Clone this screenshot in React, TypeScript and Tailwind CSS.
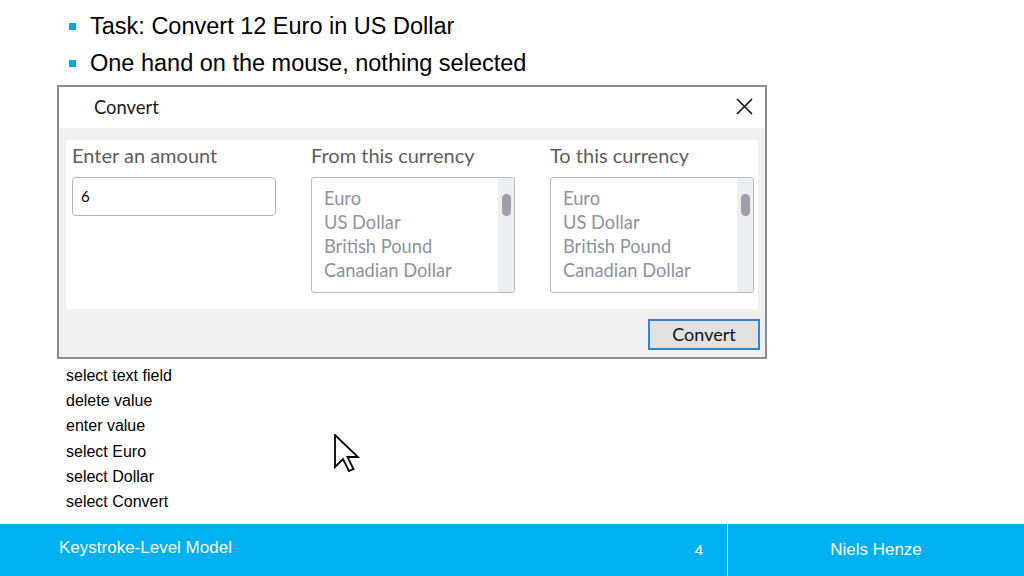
import React from 'react';

const STEPS = ['select text field', 'delete value', 'enter value', 'select Euro', 'select Dollar', 'select Convert'];
const CURRENCIES = ['Euro', 'US Dollar', 'British Pound', 'Canadian Dollar'];

function CurrencyList() {
  return (
    <div className="relative h-[116px] w-[204px] rounded-[3px] border border-[#b9b9b9] bg-white">
      <div className="pl-[12px] pt-[8px] text-[18.3px] leading-[24px] text-[#8c93a1]">
        {CURRENCIES.map((c) => (
          <div key={c}>{c}</div>
        ))}
      </div>
      {/* scrollbar track + thumb */}
      <div className="absolute right-0 top-0 bottom-0 w-[16px] rounded-r-[3px] bg-[#eceef3]">
        <div className="mx-auto mt-[16px] h-[22px] w-[9px] rounded-full bg-[#9ca1a9]" />
      </div>
    </div>
  );
}

export default function App() {
  return (
    <div className="relative flex h-[576px] w-[1024px] flex-col overflow-hidden bg-white" style={{ fontFamily: '"Liberation Sans", Arial, sans-serif' }}>
      {/* bullets */}
      <div className="pl-[69px] pt-[8px] text-[23.5px] leading-[37px] text-black">
        {['Task: Convert 12 Euro in US Dollar', 'One hand on the mouse, nothing selected'].map((t) => (
          <div key={t} className="flex items-center">
            <span className="mr-[14px] h-[7px] w-[7px] bg-[#00a6e6]" />
            <span>{t}</span>
          </div>
        ))}
      </div>

      {/* dialog */}
      <div className="ml-[57px] mt-[3px] flex h-[274px] w-[710px] flex-col border-2 border-[#8c8c8c] bg-[#f0f0f0]" style={{ fontFamily: 'Lato, "Open Sans", sans-serif' }}>
        <div className="flex h-[41px] items-center justify-between bg-white pl-[35px] pr-[12px]">
          <span className="text-[18.4px] text-[#1a1a1a]">Convert</span>
          <svg width="17" height="17" viewBox="0 0 17 17" className="mb-[2px]">
            <path d="M1 1 L16 16 M16 1 L1 16" stroke="#111" strokeWidth="1.6" fill="none" />
          </svg>
        </div>
        <div className="mx-[7px] mt-[12px] flex h-[169px] bg-white pl-[6px]">
          <div className="w-[239px] shrink-0">
            <div className="h-[37px] text-[20px] text-[#5e5e5e]">Enter an amount</div>
            <div className="flex h-[39px] w-[204px] items-center rounded-[4px] border border-[#b4b4b4] pl-[8px] text-[15px] text-black">6</div>
          </div>
          <div className="w-[239px] shrink-0">
            <div className="h-[37px] text-[20px] text-[#5e5e5e]">From this currency</div>
            <CurrencyList />
          </div>
          <div className="shrink-0">
            <div className="h-[37px] text-[20px] text-[#5e5e5e]">To this currency</div>
            <CurrencyList />
          </div>
        </div>
        <div className="flex justify-end pr-[5px] pt-[10px]">
          <div className="flex h-[31px] w-[112px] items-center justify-center border-2 border-[#2f86d8] bg-[#e1e1e1] text-[18px] text-[#111]">Convert</div>
        </div>
      </div>

      {/* steps */}
      <div className="ml-[66px] mt-[4px] text-[16px] leading-[25.2px] text-black">
        {STEPS.map((s) => (
          <div key={s}>{s}</div>
        ))}
      </div>

      {/* mouse pointer */}
      <svg className="absolute left-[334px] top-[434px]" width="26" height="40" viewBox="0 0 26 40">
        <path d="M1 1 L1 33 L9 25 L15 37 L19.5 35 L13.5 23 L24 23 Z" fill="white" stroke="black" strokeWidth="1.8" strokeLinejoin="miter" />
      </svg>

      {/* footer */}
      <div className="mt-auto flex h-[52px] bg-[#00b0f0] text-[17px] text-white">
        <div className="flex flex-1 items-center pl-[59px] pb-[4px]">
          <span>Keystroke-Level Model</span>
          <span className="ml-auto mr-[24px] mt-[4px] text-[15px]">4</span>
        </div>
        <div className="w-px bg-white" />
        <div className="flex w-[296px] items-center justify-center pb-[1px]">Niels Henze</div>
      </div>
    </div>
  );
}
